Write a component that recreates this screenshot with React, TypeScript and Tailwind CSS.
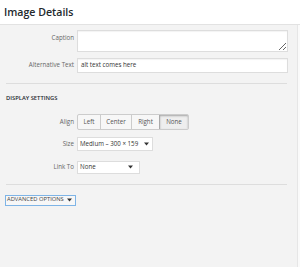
import React from "react";

const font = { fontFamily: '"Open Sans", "Noto Sans", sans-serif' };

function Caret() {
  return (
    <svg width="5" height="4" viewBox="0 0 5 4" className="shrink-0">
      <path d="M0 0.5 L5 0.5 L2.5 3.5 Z" fill="#333" />
    </svg>
  );
}

export default function App() {
  return (
    <div
      className="w-[300px] h-[267px] flex flex-col bg-[#f3f3f3] overflow-hidden whitespace-nowrap"
      style={font}
    >
      <div className="h-[25px] shrink-0 bg-white border-b border-[#e2e2e2] flex items-center pl-[4px]">
        <h1 className="text-[10.6px] font-semibold text-[#23282d] leading-none">
          Image Details
        </h1>
      </div>
      <div className="flex flex-1">
        <div className="w-[297px] flex flex-col">
          {/* Caption */}
          <div className="flex gap-[3px] mt-[5px]">
            <label className="w-[74px] text-right text-[6.2px] text-[#666] pt-[5px] leading-none">
              Caption
            </label>
            <textarea className="w-[211px] h-[22px] bg-white border border-[#dddddd] shadow-[inset_0_1px_1px_rgba(0,0,0,0.05)] outline-none block" />
          </div>
          {/* Alt text */}
          <div className="flex gap-[3px] mt-[6px] items-center">
            <label className="w-[74px] text-right text-[6.2px] text-[#666] leading-none">
              Alternative Text
            </label>
            <div className="w-[211px] h-[15px] bg-white border border-[#dddddd] shadow-[inset_0_1px_1px_rgba(0,0,0,0.05)] flex items-center pl-[3px] text-[6.2px] text-[#333] leading-none">
              alt text comes here
            </div>
          </div>
          <div className="ml-[6px] w-[281px] h-px bg-[#dddddd] mt-[10px]" />
          <div className="ml-[6px] mt-[12px] text-[5.8px] font-semibold text-[#23282d] uppercase leading-none">
            Display Settings
          </div>
          {/* Align */}
          <div className="flex gap-[3px] mt-[12px] items-center">
            <label className="w-[74px] text-right text-[6.2px] text-[#666] leading-none">
              Align
            </label>
            <div className="flex h-[16px] border border-[#cccccc] rounded-[2px] bg-[#f7f7f7] text-[6.2px] text-[#555] leading-none overflow-hidden">
              <div className="w-[23px] flex items-center justify-center border-r border-[#cccccc]">Left</div>
              <div className="w-[31px] flex items-center justify-center border-r border-[#cccccc]">Center</div>
              <div className="w-[28px] flex items-center justify-center border-r border-[#aaaaaa]">Right</div>
              <div className="w-[28px] flex items-center justify-center bg-[#eeeeee] shadow-[inset_0_1px_2px_rgba(0,0,0,0.3)]">None</div>
            </div>
          </div>
          {/* Size */}
          <div className="flex gap-[3px] mt-[7px] items-center">
            <label className="w-[74px] text-right text-[6.2px] text-[#666] leading-none">
              Size
            </label>
            <div className="w-[76px] h-[14px] bg-white border border-[#dddddd] flex items-center justify-between pl-[2px] pr-[3px] text-[6.2px] text-[#333] leading-none">
              <span>Medium – 300 × 159</span>
              <Caret />
            </div>
          </div>
          {/* Link To */}
          <div className="flex gap-[3px] mt-[10px] items-center">
            <label className="w-[74px] text-right text-[6.2px] text-[#666] leading-none">
              Link To
            </label>
            <div className="w-[63px] h-[13px] bg-white border border-[#dddddd] flex items-center justify-between pl-[2px] pr-[6px] text-[6.2px] text-[#333] leading-none">
              <span>None</span>
              <Caret />
            </div>
          </div>
          <div className="ml-[6px] w-[281px] h-px bg-[#dddddd] mt-[10px]" />
          <div className="ml-[5px] mt-[10px] w-[71px] h-[11px] border border-[#7eb4e6] bg-[#f7f7f7] flex items-center justify-between pl-[1px] pr-[3px] text-[5.8px] text-[#444] uppercase leading-none">
            <span>Advanced Options</span>
            <Caret />
          </div>
        </div>
        <div className="flex-1 border-l border-[#e6e6e6] bg-[#fafafa]" />
      </div>
    </div>
  );
}
